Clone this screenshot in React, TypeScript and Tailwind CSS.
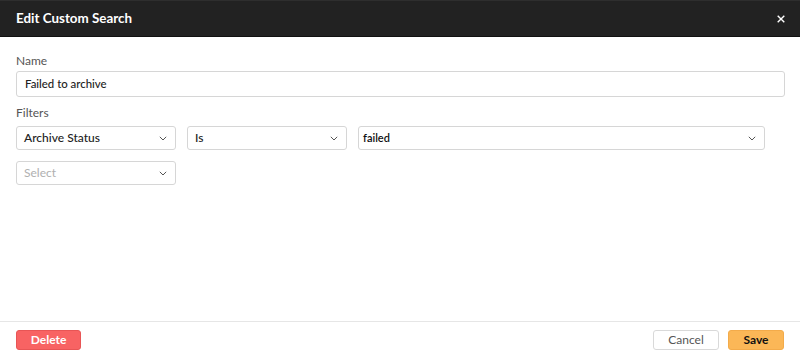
import React from "react";

function Chevron() {
  return (
    <svg width="8" height="5" viewBox="0 0 8 5" fill="none" className="shrink-0">
      <path d="M0.8 0.8l3.2 3.2L7.2 0.8" stroke="#555" strokeWidth="1" />
    </svg>
  );
}

function Select({
  value,
  placeholder,
  className,
  textClass,
}: {
  value?: string;
  placeholder?: string;
  className: string;
  textClass?: string;
}) {
  return (
    <div
      className={`flex items-center justify-between border border-[#d6d6d6] rounded-[3px] bg-white pr-[8px] ${className}`}
    >
      <span className={value ? textClass ?? "text-[12px] text-[#222] font-medium" : "text-[12px] text-[#b0b0b0]"}>
        {value ?? placeholder}
      </span>
      <Chevron />
    </div>
  );
}

export default function App() {
  return (
    <div
      className="w-[800px] h-[357px] bg-white flex flex-col overflow-hidden"
      style={{ fontFamily: "Lato, 'Noto Sans', sans-serif" }}
    >
      <div className="h-[37px] bg-[#222222] border-t border-t-[#2e2e2e] border-b border-b-[#111] flex items-center justify-between pl-[16px] pr-[15px] shrink-0">
        <span className="text-white font-bold text-[13.4px]">Edit Custom Search</span>
        <svg width="8" height="8" viewBox="0 0 8 8">
          <path d="M0.7 0.7l6.6 6.6M7.3 0.7l-6.6 6.6" stroke="white" strokeWidth="1.4" />
        </svg>
      </div>
      <div className="flex-1 px-[16px] pt-[16px] flex flex-col">
        <div className="text-[12px] text-[#555] leading-[16px]">Name</div>
        <div className="mt-[2px] h-[26px] w-[769px] border border-[#d6d6d6] rounded-[3px] flex items-center pl-[8px]">
          <span className="text-[11.4px] text-[#222] font-medium">Failed to archive</span>
        </div>
        <div className="mt-[8px] text-[12px] text-[#555] leading-[16px]">Filters</div>
        <div className="mt-[5px] flex gap-[11px]">
          <Select value="Archive Status" className="w-[160px] h-[24px] pl-[7px]" />
          <Select value="Is" className="w-[160px] h-[24px] pl-[7px]" />
          <Select
            value="failed"
            className="w-[407px] h-[24px] pl-[4px]"
            textClass="text-[11px] text-[#111] font-semibold"
          />
        </div>
        <div className="mt-[11px] flex">
          <Select placeholder="Select" className="w-[160px] h-[24px] pl-[7px]" />
        </div>
      </div>
      <div className="h-[36px] border-t border-[#e6e6e6] flex items-start justify-between px-[16px] pt-[8px] shrink-0">
        <button className="w-[65px] h-[20px] rounded-[3px] bg-[#f86363] border border-[#e85555] text-white font-bold text-[12px] leading-none">
          Delete
        </button>
        <div className="flex gap-[9px]">
          <button className="w-[66px] h-[20px] rounded-[3px] bg-white border border-[#d9d9d9] text-[#555] text-[12px] leading-none">
            Cancel
          </button>
          <button className="w-[56px] h-[20px] rounded-[3px] bg-[#fbb757] border border-[#f3ab4a] text-[#111] font-bold text-[12px] leading-none">
            Save
          </button>
        </div>
      </div>
    </div>
  );
}
